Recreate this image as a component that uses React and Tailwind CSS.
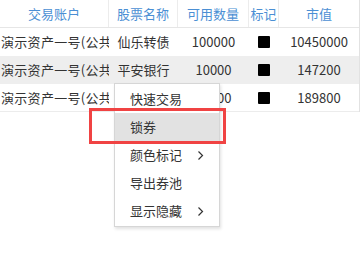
import React from 'react';

const rows = [
  { account: '演示资产一号(公共', name: '仙乐转债', qty: '100000', value: '10450000' },
  { account: '演示资产一号(公共', name: '平安银行', qty: '10000', value: '147200' },
  { account: '演示资产一号(公共', name: '中国平安', qty: '10000', value: '189800' },
];

const headers = ['交易账户', '股票名称', '可用数量', '标记', '市值'];

const menuItems = [
  { label: '快速交易' },
  { label: '锁券', active: true },
  { label: '颜色标记', sub: true },
  { label: '导出券池' },
  { label: '显示隐藏', sub: true },
];

const Chevron = () => (
  <svg width="7" height="11" viewBox="0 0 7 11" fill="none" className="ml-auto mr-[15px]">
    <path d="M1.5 1.5 L5.5 5.5 L1.5 9.5" stroke="#333" strokeWidth="1.2" />
  </svg>
);

const App = () => {
  return (
    <div
      className="relative w-[360px] h-[267px] bg-white overflow-hidden text-[13px] text-[#333]"
      style={{ fontFamily: '"Noto Sans CJK SC", "Noto Sans", sans-serif' }}
    >
      <div className="w-[360px] border-r border-[#e2e2e2]">
        <div className="grid grid-cols-[109px_69px_71px_30px_80px] h-[28px] border-b border-[#e6e6e6] text-[#4b8fd4]">
          {headers.map((h, i) => (
            <div
              key={h}
              className={`flex items-center justify-center ${i < 4 ? 'border-r border-[#ececec]' : ''}`}
            >
              {h}
            </div>
          ))}
        </div>
        {rows.map((r, i) => (
          <div
            key={i}
            className={`grid grid-cols-[109px_69px_71px_30px_80px] h-[28px] items-center ${
              i === 1 ? 'bg-[#eeeeee]' : ''
            } ${i === 2 ? 'border-b border-[#ececec]' : ''}`}
          >
            <div className="overflow-hidden whitespace-nowrap pl-[1px] pr-[1px] tracking-[0.3px]">{r.account}</div>
            <div className="text-center">{r.name}</div>
            <div className="text-center">{r.qty}</div>
            <div className="flex justify-center">
              <span className="block w-[12px] h-[12px] bg-black rounded-[1px]" />
            </div>
            <div className="text-center">{r.value}</div>
          </div>
        ))}
      </div>

      {/* context menu */}
      <div className="absolute left-[114px] top-[83px] w-[106px] bg-white border border-[#d6d6d6] py-[1px] shadow-[1px_2px_3px_rgba(0,0,0,0.12)]">
        {menuItems.map((m) => (
          <div
            key={m.label}
            className={`flex items-center h-[28px] pl-[15px] ${m.active ? 'bg-[#e2e2e2]' : ''}`}
          >
            <span>{m.label}</span>
            {m.sub && <Chevron />}
          </div>
        ))}
      </div>

      {/* highlight box */}
      <div className="absolute left-[89px] top-[108px] w-[137px] h-[36px] border-[3px] border-[#f04343]" />
    </div>
  );
};

export default App;
